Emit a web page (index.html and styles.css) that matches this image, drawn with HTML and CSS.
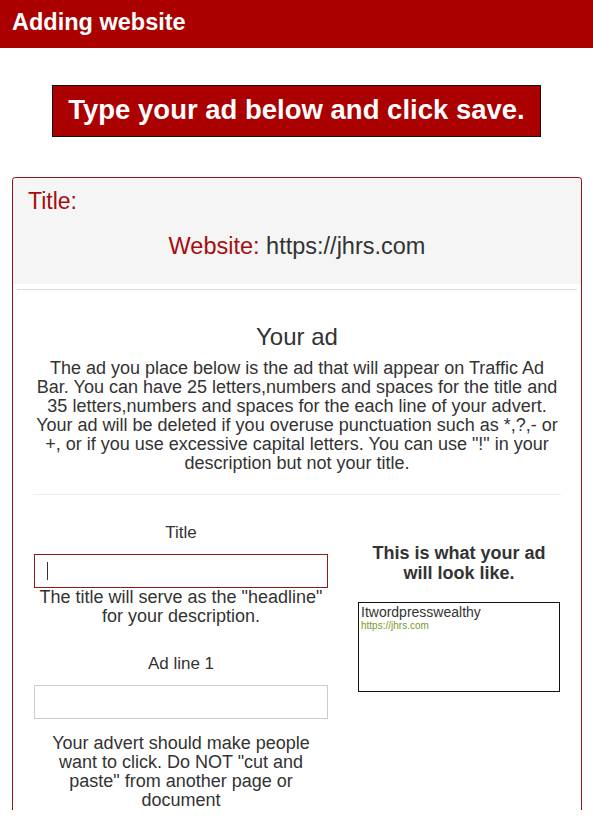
FILE: index.html
```html
<!DOCTYPE html>
<html>
<head>
<meta charset="utf-8">
<link rel="stylesheet" href="styles.css">
</head>
<body>
<div class="topbar">Adding website</div>
<div class="banner">Type your ad below and click save.</div>
<div class="panel">
  <div class="panel-head">
    <div class="ttl">Title:</div>
    <div class="site"><span class="lbl">Website:</span> https://jhrs.com</div>
  </div>
  <div class="rule"></div>
  <div class="panel-body">
    <h2 class="yourad">Your ad</h2>
    <p class="intro">The ad you place below is the ad that will appear on Traffic Ad Bar. You can have 25 letters,numbers and spaces for the title and 35 letters,numbers and spaces for the each line of your advert. Your ad will be deleted if you overuse punctuation such as *,?,- or +, or if you use excessive capital letters. You can use "!" in your description but not your title.</p>
    <div class="rule2"></div>
    <div class="cols">
      <div class="left">
        <div class="flabel">Title</div>
        <div class="input focus"><span class="caret"></span></div>
        <div class="help1">The title will serve as the "headline" for your description.</div>
        <div class="flabel second">Ad line 1</div>
        <div class="input"></div>
        <div class="help2">Your advert should make people want to click. Do NOT "cut and paste" from another page or document</div>
      </div>
      <div class="right">
        <div class="preview-head">This is what your ad will look like.</div>
        <div class="preview">
          <div class="pv-title">Itwordpresswealthy</div>
          <div class="pv-url">https://jhrs.com</div>
        </div>
      </div>
    </div>
  </div>
</div>
</body>
</html>
```
FILE: styles.css
```css
html, body {
  margin: 0;
  padding: 0;
  background: #fff;
  font-family: "Liberation Sans", Arial, sans-serif;
  color: #333;
}
.topbar {
  background: #aa0000;
  color: #fff;
  font-weight: bold;
  font-size: 23.5px;
  line-height: 26px;
  height: 48px;
  box-sizing: border-box;
  padding: 9px 12px 0;
}
.banner {
  width: 489px;
  height: 52px;
  box-sizing: border-box;
  margin: 37px auto 0;
  background: #aa0000;
  border: 1px solid #111;
  color: #fff;
  font-weight: bold;
  font-size: 27.5px;
  line-height: 48px;
  text-align: center;
}
.panel {
  margin: 40px 11px 0 12px;
  border: 1px solid #8e1616;
  border-bottom: none;
  border-radius: 4px 4px 0 0;
  overflow: hidden;
}
.panel-head {
  background: #f5f5f5;
  padding: 10px 15px 25px;
}
.ttl {
  color: #a50e0e;
  font-size: 23px;
  line-height: 26px;
}
.site {
  margin-top: 19px;
  text-align: center;
  font-size: 23.5px;
  line-height: 26px;
  color: #333;
}
.site .lbl { color: #a50e0e; }
.rule {
  height: 1px;
  background: #dcdcdc;
  margin: 5px 4px 0;
}
.panel-body {
  padding: 0 20px 0 20px;
}
.yourad {
  margin: 33px 0 0;
  font-weight: normal;
  font-size: 24px;
  line-height: 28px;
  text-align: center;
  color: #333;
}
.intro {
  margin: 8px 0 0;
  font-size: 18px;
  line-height: 19px;
  text-align: center;
}
.rule2 {
  height: 1px;
  background: #eee;
  margin-top: 21px;
}
.cols {
  display: grid;
  grid-template-columns: 294px 202px;
  column-gap: 30px;
  margin-left: 1px;
  padding-top: 28px;
}
.left { text-align: center; }
.flabel {
  font-size: 17px;
  line-height: 20px;
}
.flabel.second { margin-top: 28px; }
.input {
  margin-top: 11px;
  height: 34px;
  box-sizing: border-box;
  border: 1px solid #ccc;
  text-align: left;
  padding: 7px 12px;
}
.input.focus { border-color: #8e1a1a; }
.caret {
  display: block;
  width: 1px;
  height: 18px;
  background: #333;
}
.help1 {
  font-size: 18px;
  line-height: 19px;
}
.help2 {
  margin-top: 15px;
  font-size: 18px;
  line-height: 19px;
  padding: 0 12px;
}
.preview-head {
  margin-top: 20px;
  font-weight: bold;
  font-size: 18px;
  line-height: 20px;
  text-align: center;
}
.preview {
  margin-top: 19px;
  height: 90px;
  box-sizing: border-box;
  border: 1px solid #111;
  padding: 1px 2px;
}
.pv-title {
  font-size: 14px;
  line-height: 16px;
  color: #333;
}
.pv-url {
  font-size: 10px;
  line-height: 11px;
  color: #7c9a26;
}
```
